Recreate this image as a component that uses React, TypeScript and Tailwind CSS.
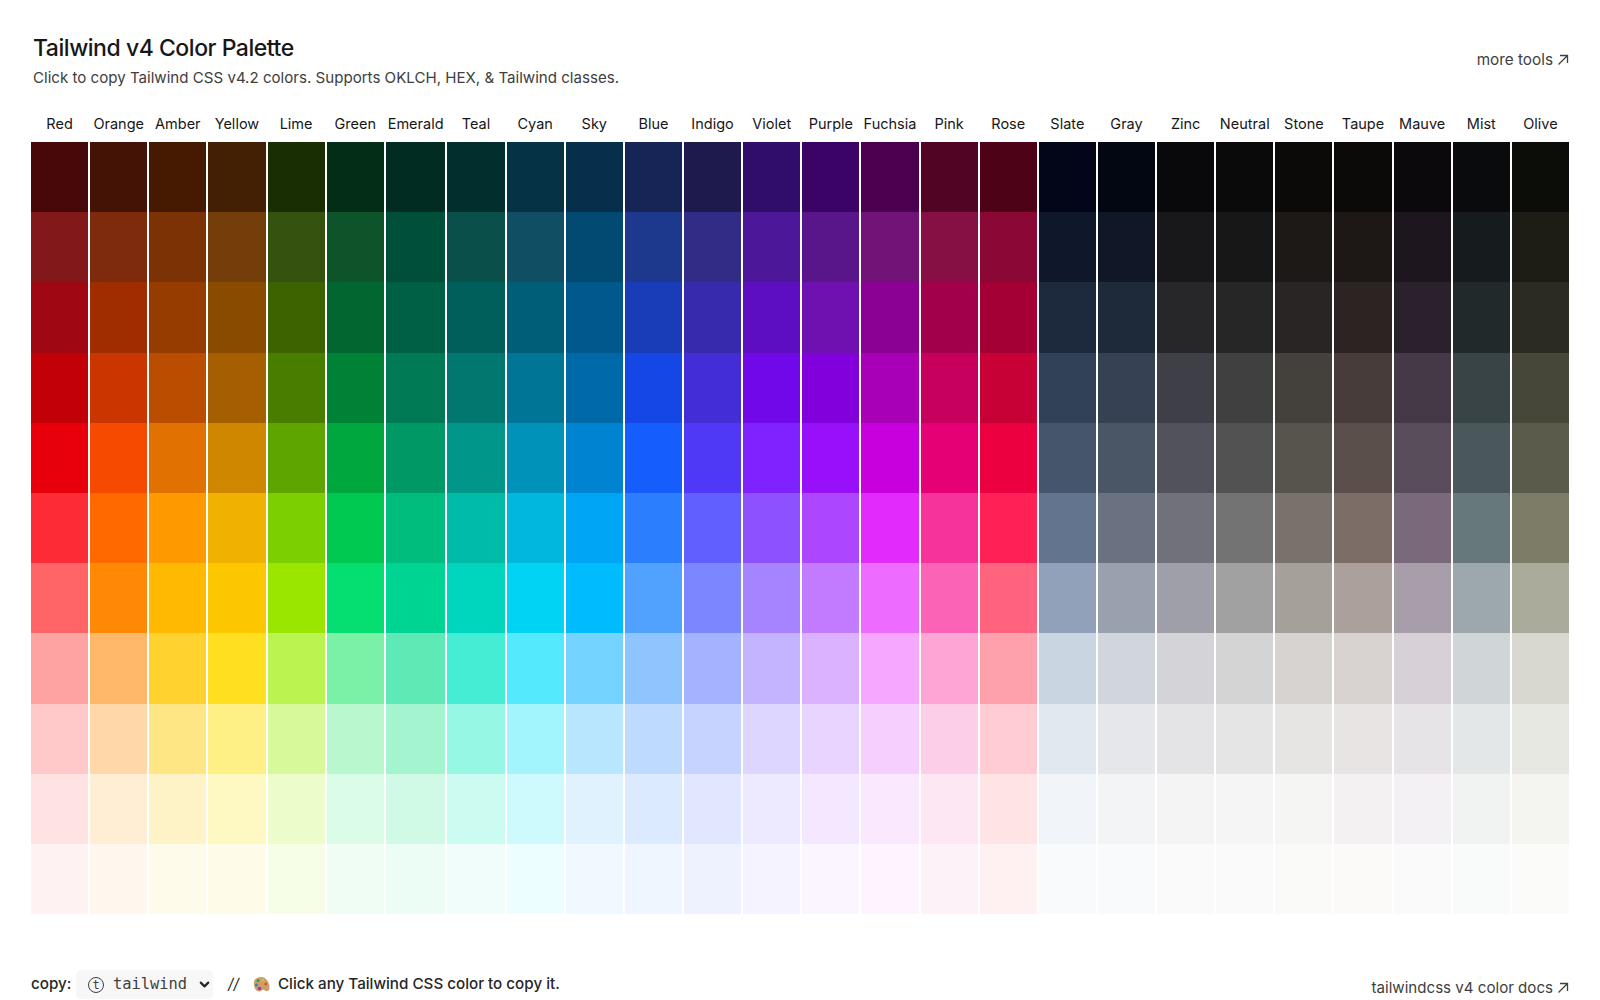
import React from 'react';
import { ChevronDown } from 'lucide-react';

type Family = { name: string; shades: string[] };

// shades run from 950 (top) down to 50 (bottom)
const families: Family[] = [
  { name: 'Red', shades: ['bg-red-950', 'bg-red-900', 'bg-red-800', 'bg-red-700', 'bg-red-600', 'bg-red-500', 'bg-red-400', 'bg-red-300', 'bg-red-200', 'bg-red-100', 'bg-red-50'] },
  { name: 'Orange', shades: ['bg-orange-950', 'bg-orange-900', 'bg-orange-800', 'bg-orange-700', 'bg-orange-600', 'bg-orange-500', 'bg-orange-400', 'bg-orange-300', 'bg-orange-200', 'bg-orange-100', 'bg-orange-50'] },
  { name: 'Amber', shades: ['bg-amber-950', 'bg-amber-900', 'bg-amber-800', 'bg-amber-700', 'bg-amber-600', 'bg-amber-500', 'bg-amber-400', 'bg-amber-300', 'bg-amber-200', 'bg-amber-100', 'bg-amber-50'] },
  { name: 'Yellow', shades: ['bg-yellow-950', 'bg-yellow-900', 'bg-yellow-800', 'bg-yellow-700', 'bg-yellow-600', 'bg-yellow-500', 'bg-yellow-400', 'bg-yellow-300', 'bg-yellow-200', 'bg-yellow-100', 'bg-yellow-50'] },
  { name: 'Lime', shades: ['bg-lime-950', 'bg-lime-900', 'bg-lime-800', 'bg-lime-700', 'bg-lime-600', 'bg-lime-500', 'bg-lime-400', 'bg-lime-300', 'bg-lime-200', 'bg-lime-100', 'bg-lime-50'] },
  { name: 'Green', shades: ['bg-green-950', 'bg-green-900', 'bg-green-800', 'bg-green-700', 'bg-green-600', 'bg-green-500', 'bg-green-400', 'bg-green-300', 'bg-green-200', 'bg-green-100', 'bg-green-50'] },
  { name: 'Emerald', shades: ['bg-emerald-950', 'bg-emerald-900', 'bg-emerald-800', 'bg-emerald-700', 'bg-emerald-600', 'bg-emerald-500', 'bg-emerald-400', 'bg-emerald-300', 'bg-emerald-200', 'bg-emerald-100', 'bg-emerald-50'] },
  { name: 'Teal', shades: ['bg-teal-950', 'bg-teal-900', 'bg-teal-800', 'bg-teal-700', 'bg-teal-600', 'bg-teal-500', 'bg-teal-400', 'bg-teal-300', 'bg-teal-200', 'bg-teal-100', 'bg-teal-50'] },
  { name: 'Cyan', shades: ['bg-cyan-950', 'bg-cyan-900', 'bg-cyan-800', 'bg-cyan-700', 'bg-cyan-600', 'bg-cyan-500', 'bg-cyan-400', 'bg-cyan-300', 'bg-cyan-200', 'bg-cyan-100', 'bg-cyan-50'] },
  { name: 'Sky', shades: ['bg-sky-950', 'bg-sky-900', 'bg-sky-800', 'bg-sky-700', 'bg-sky-600', 'bg-sky-500', 'bg-sky-400', 'bg-sky-300', 'bg-sky-200', 'bg-sky-100', 'bg-sky-50'] },
  { name: 'Blue', shades: ['bg-blue-950', 'bg-blue-900', 'bg-blue-800', 'bg-blue-700', 'bg-blue-600', 'bg-blue-500', 'bg-blue-400', 'bg-blue-300', 'bg-blue-200', 'bg-blue-100', 'bg-blue-50'] },
  { name: 'Indigo', shades: ['bg-indigo-950', 'bg-indigo-900', 'bg-indigo-800', 'bg-indigo-700', 'bg-indigo-600', 'bg-indigo-500', 'bg-indigo-400', 'bg-indigo-300', 'bg-indigo-200', 'bg-indigo-100', 'bg-indigo-50'] },
  { name: 'Violet', shades: ['bg-violet-950', 'bg-violet-900', 'bg-violet-800', 'bg-violet-700', 'bg-violet-600', 'bg-violet-500', 'bg-violet-400', 'bg-violet-300', 'bg-violet-200', 'bg-violet-100', 'bg-violet-50'] },
  { name: 'Purple', shades: ['bg-purple-950', 'bg-purple-900', 'bg-purple-800', 'bg-purple-700', 'bg-purple-600', 'bg-purple-500', 'bg-purple-400', 'bg-purple-300', 'bg-purple-200', 'bg-purple-100', 'bg-purple-50'] },
  { name: 'Fuchsia', shades: ['bg-fuchsia-950', 'bg-fuchsia-900', 'bg-fuchsia-800', 'bg-fuchsia-700', 'bg-fuchsia-600', 'bg-fuchsia-500', 'bg-fuchsia-400', 'bg-fuchsia-300', 'bg-fuchsia-200', 'bg-fuchsia-100', 'bg-fuchsia-50'] },
  { name: 'Pink', shades: ['bg-pink-950', 'bg-pink-900', 'bg-pink-800', 'bg-pink-700', 'bg-pink-600', 'bg-pink-500', 'bg-pink-400', 'bg-pink-300', 'bg-pink-200', 'bg-pink-100', 'bg-pink-50'] },
  { name: 'Rose', shades: ['bg-rose-950', 'bg-rose-900', 'bg-rose-800', 'bg-rose-700', 'bg-rose-600', 'bg-rose-500', 'bg-rose-400', 'bg-rose-300', 'bg-rose-200', 'bg-rose-100', 'bg-rose-50'] },
  { name: 'Slate', shades: ['bg-slate-950', 'bg-slate-900', 'bg-slate-800', 'bg-slate-700', 'bg-slate-600', 'bg-slate-500', 'bg-slate-400', 'bg-slate-300', 'bg-slate-200', 'bg-slate-100', 'bg-slate-50'] },
  { name: 'Gray', shades: ['bg-gray-950', 'bg-gray-900', 'bg-gray-800', 'bg-gray-700', 'bg-gray-600', 'bg-gray-500', 'bg-gray-400', 'bg-gray-300', 'bg-gray-200', 'bg-gray-100', 'bg-gray-50'] },
  { name: 'Zinc', shades: ['bg-zinc-950', 'bg-zinc-900', 'bg-zinc-800', 'bg-zinc-700', 'bg-zinc-600', 'bg-zinc-500', 'bg-zinc-400', 'bg-zinc-300', 'bg-zinc-200', 'bg-zinc-100', 'bg-zinc-50'] },
  { name: 'Neutral', shades: ['bg-neutral-950', 'bg-neutral-900', 'bg-neutral-800', 'bg-neutral-700', 'bg-neutral-600', 'bg-neutral-500', 'bg-neutral-400', 'bg-neutral-300', 'bg-neutral-200', 'bg-neutral-100', 'bg-neutral-50'] },
  { name: 'Stone', shades: ['bg-stone-950', 'bg-stone-900', 'bg-stone-800', 'bg-stone-700', 'bg-stone-600', 'bg-stone-500', 'bg-stone-400', 'bg-stone-300', 'bg-stone-200', 'bg-stone-100', 'bg-stone-50'] },
  // the 4.2 families are spelled out, the build may not ship them
  { name: 'Taupe', shades: ['bg-[oklch(14.7%_0.004_49.3)]', 'bg-[oklch(21.4%_0.009_43.1)]', 'bg-[oklch(26.8%_0.011_36.5)]', 'bg-[oklch(36.7%_0.016_35.7)]', 'bg-[oklch(43.8%_0.017_39.3)]', 'bg-[oklch(54.7%_0.021_43.1)]', 'bg-[oklch(71.4%_0.014_41.2)]', 'bg-[oklch(86.8%_0.007_39.5)]', 'bg-[oklch(92.2%_0.005_34.3)]', 'bg-[oklch(96%_0.002_17.2)]', 'bg-[oklch(98.6%_0.002_67.8)]'] },
  { name: 'Mauve', shades: ['bg-[oklch(14.5%_0.008_326)]', 'bg-[oklch(21.2%_0.019_322.12)]', 'bg-[oklch(26.3%_0.024_320.12)]', 'bg-[oklch(36.4%_0.029_323.89)]', 'bg-[oklch(43.5%_0.029_321.78)]', 'bg-[oklch(54.2%_0.034_322.5)]', 'bg-[oklch(71.1%_0.019_323.02)]', 'bg-[oklch(86.5%_0.012_325.68)]', 'bg-[oklch(92.2%_0.005_325.62)]', 'bg-[oklch(96%_0.003_325.6)]', 'bg-[oklch(98.5%_0_0)]'] },
  { name: 'Mist', shades: ['bg-[oklch(14.8%_0.004_228.8)]', 'bg-[oklch(21.8%_0.008_223.9)]', 'bg-[oklch(27.5%_0.011_216.9)]', 'bg-[oklch(37.8%_0.015_216)]', 'bg-[oklch(45%_0.017_213.2)]', 'bg-[oklch(56%_0.021_213.5)]', 'bg-[oklch(72.3%_0.014_214.4)]', 'bg-[oklch(87.2%_0.007_219.6)]', 'bg-[oklch(92.5%_0.005_214.3)]', 'bg-[oklch(96.3%_0.002_197.1)]', 'bg-[oklch(98.7%_0.002_197.1)]'] },
  { name: 'Olive', shades: ['bg-[oklch(15.3%_0.006_107.1)]', 'bg-[oklch(22.8%_0.013_107.4)]', 'bg-[oklch(28.6%_0.016_107.4)]', 'bg-[oklch(39.4%_0.023_107.4)]', 'bg-[oklch(46.6%_0.025_107.3)]', 'bg-[oklch(58%_0.031_107.3)]', 'bg-[oklch(73.7%_0.021_106.9)]', 'bg-[oklch(88%_0.011_106.6)]', 'bg-[oklch(93%_0.007_106.5)]', 'bg-[oklch(96.6%_0.005_106.5)]', 'bg-[oklch(98.8%_0.003_106.5)]'] },
];

const ArrowIcon = () => (
  <svg width="12" height="12" viewBox="0 0 12 12" fill="none" stroke="currentColor" strokeWidth="1.3" className="shrink-0">
    <path d="M1.5 10.500 10.500 1.500M3 1.500h7.500V9" />
  </svg>
);

const PaletteIcon = () => (
  <svg width="17" height="17" viewBox="0 0 17 17" className="shrink-0">
    <path d="M2 3.500C5 .5 10 0 13 3c2.500 2.500 4 6.500 3.500 9.500-.4 2.500-3 3.500-4.500 2-1.200-1.200-2.500-1-3.500 0-1.500 1.500-4.500 1.200-6-1C.8 11 .2 6 2 3.500z" fill="#c9a06a" />
    <circle cx="5" cy="4.500" r="1.600" fill="#3f9d4d" />
    <circle cx="9.500" cy="4" r="1.500" fill="#e2b93b" />
    <circle cx="12.800" cy="8" r="1.500" fill="#d9562e" />
    <circle cx="3.500" cy="9" r="1.500" fill="#3d78c9" />
    <circle cx="6.500" cy="12.500" r="1.800" fill="#a03c8f" />
  </svg>
);

export default function App() {
  return (
    <div className="h-[1000px] overflow-hidden bg-white px-[31px] font-['Inter',sans-serif] text-[#171717]">
      <header className="flex items-start justify-between pt-[33px]">
        <div className="pl-0.5">
          <h1 className="text-[23px] leading-[30px] font-[550] tracking-[-0.02em]">Tailwind v4 Color Palette</h1>
          <p className="mt-[3px] text-[15.1px] leading-[24px] text-[#404040]">
            Click to copy Tailwind CSS v4.2 colors. Supports OKLCH, HEX, &amp; Tailwind classes.
          </p>
        </div>
        <a className="mt-[16px] flex items-center gap-1 text-[15.3px] leading-[22px] text-[#404040]">
          more tools
          <ArrowIcon />
        </a>
      </header>

      <div className="mt-6 grid grid-cols-[repeat(6,minmax(0,1fr))_59.7px_repeat(19,minmax(0,1fr))] gap-x-0.5">
        {families.map((family) => (
          <div key={family.name}>
            <div className="mb-2 whitespace-nowrap text-center text-[14.5px] leading-[20px]">{family.name}</div>
            {family.shades.map((shade) => (
              <div key={shade} className={`h-[70.2px] ${shade}`} />
            ))}
          </div>
        ))}
      </div>

      <footer className="mt-[56px] flex items-start justify-between">
        <div className="flex items-center text-[15.2px] text-[#262626]">
          <span className="w-[45px] font-medium">copy:</span>
          <div className="flex h-[29px] w-[137px] items-center rounded-[5px] bg-[#f7f7f7] pl-3 font-['DejaVu_Sans_Mono',monospace] text-[15.4px] text-[#404040]">
            <span className="flex h-4 w-4 items-center justify-center rounded-full border border-[#404040] text-[12px] leading-none">t</span>
            <span className="ml-[9px]">tailwind</span>
            <ChevronDown size={15} strokeWidth={3.5} className="ml-[10px] text-[#262626]" />
          </div>
          <span className="ml-[15px] italic">//</span>
          <span className="ml-[14px]"><PaletteIcon /></span>
          <span className="ml-[8px] font-medium">Click any Tailwind CSS color to copy it.</span>
        </div>
        <a className="mt-[7px] flex items-center gap-1 text-[15.1px] leading-[22px] text-[#404040]">
          tailwindcss v4 color docs
          <ArrowIcon />
        </a>
      </footer>
    </div>
  );
}
